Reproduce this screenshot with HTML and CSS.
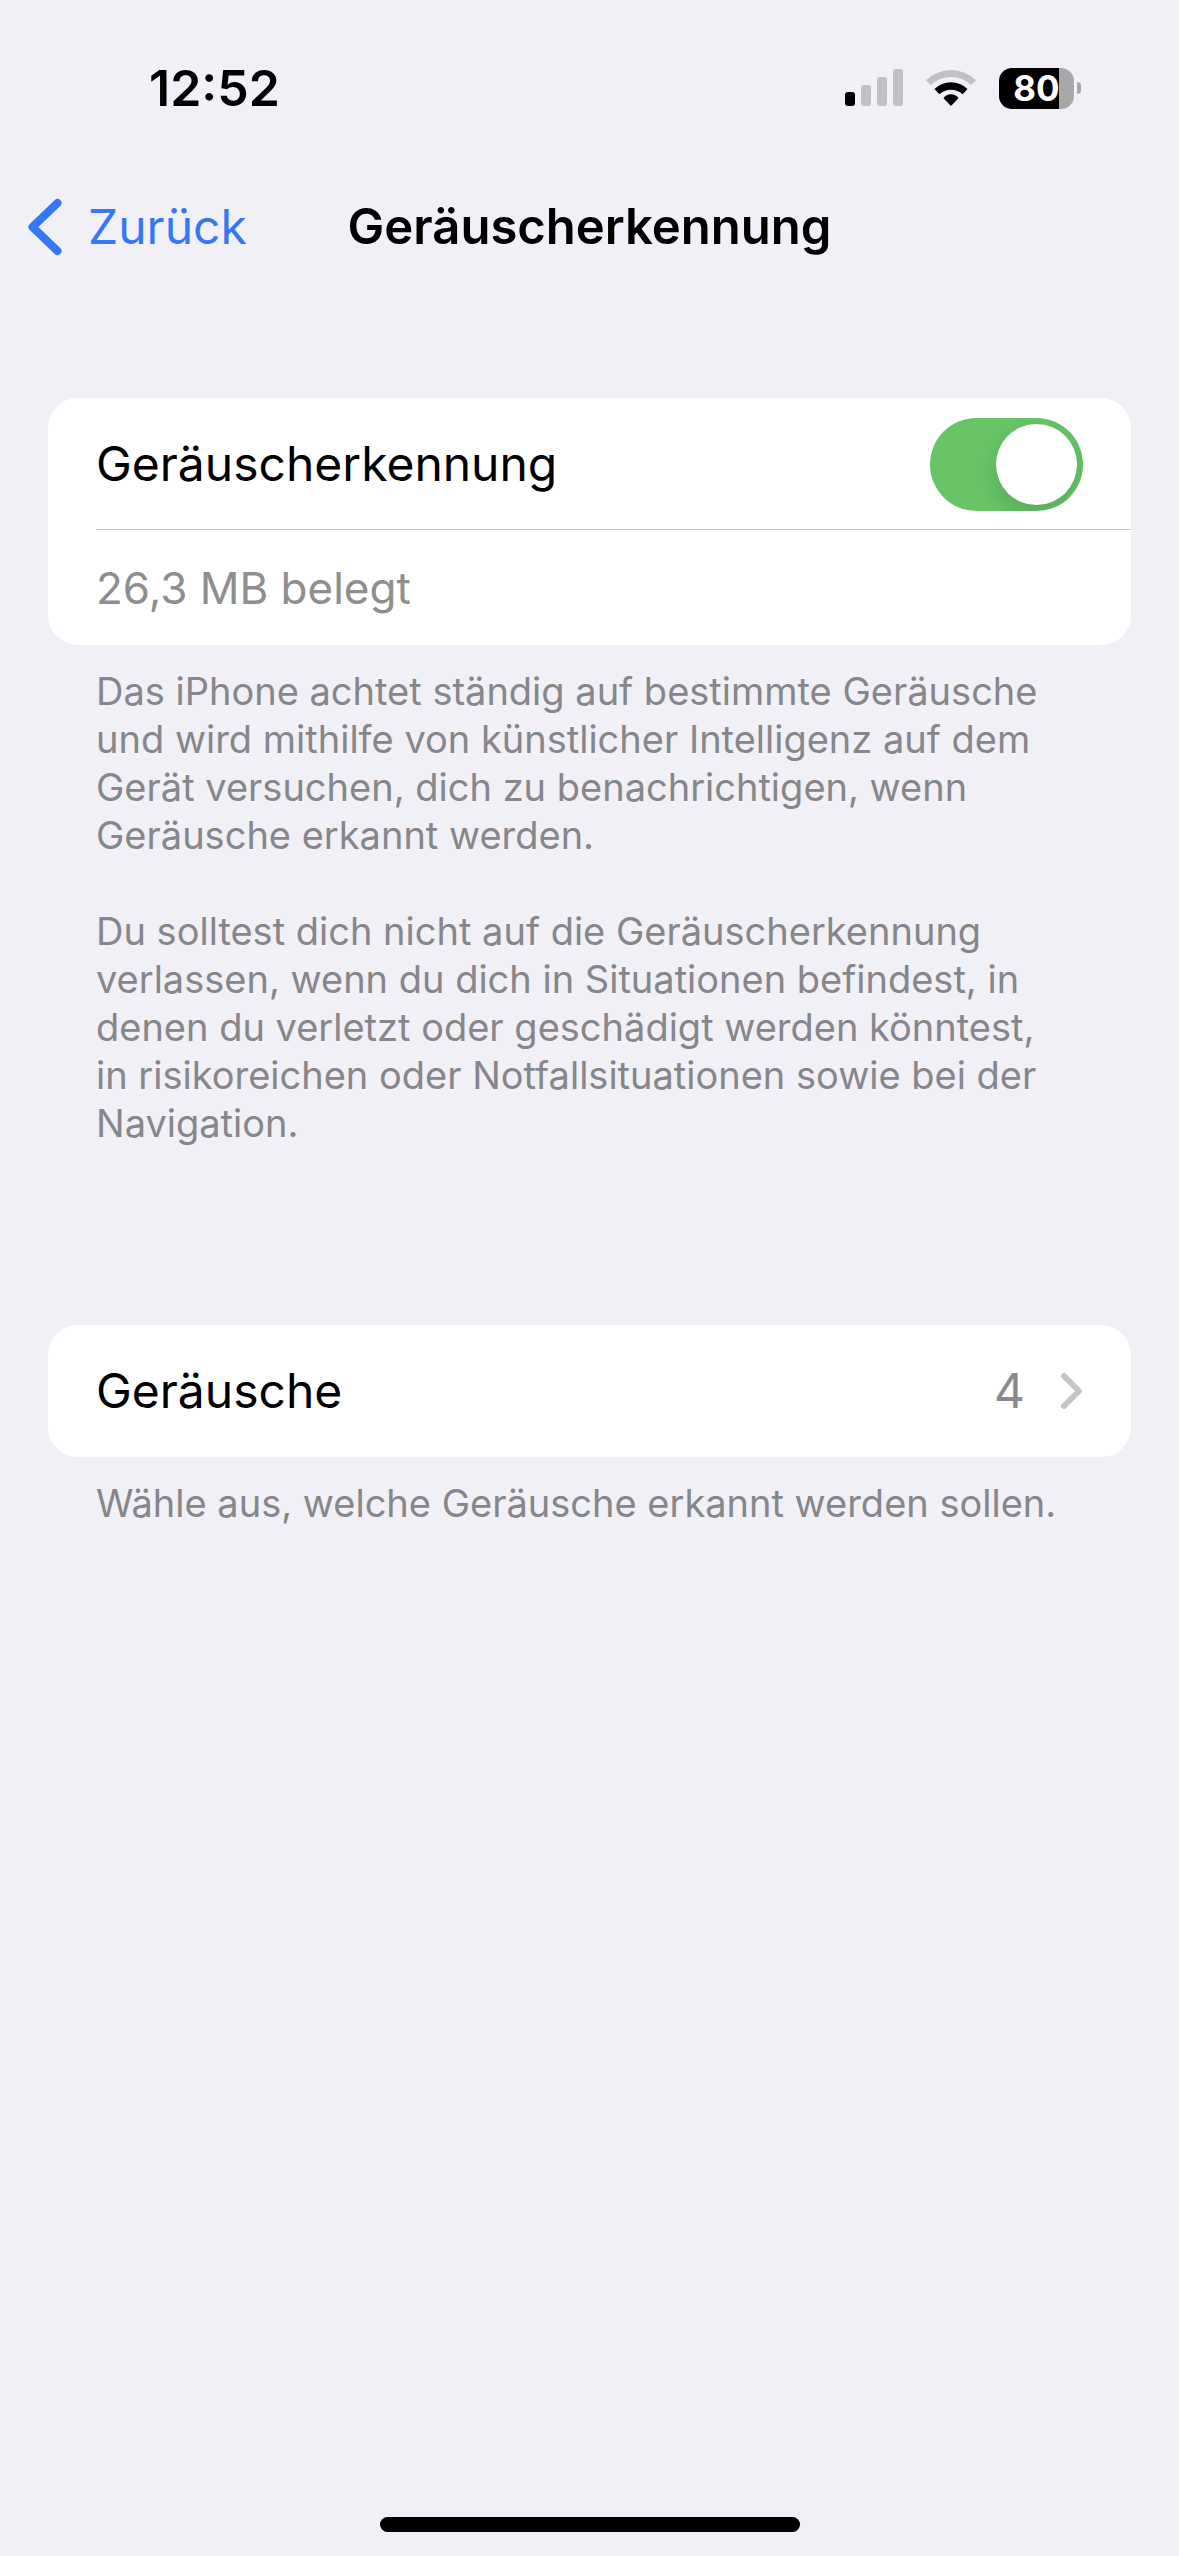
FILE: index.html
```html
<!DOCTYPE html>
<html lang="de">
<head>
    <meta charset="UTF-8">
    <meta name="viewport" content="width=device-width, initial-scale=1.0">
    <title>Geräuscherkennung</title>
    <link rel="stylesheet" href="styles.css">
</head>
<body>
    <div class="screen">
        <div class="status-bar">
            <div class="time">12:52</div>
            <div class="status-icons">
                <svg class="signal" width="58" height="38" viewBox="0 0 58 38" aria-hidden="true">
                    <rect x="0" y="23" width="10" height="14" rx="3" fill="#000"/>
                    <rect x="16" y="16" width="10" height="21" rx="3" fill="#c1c0c5"/>
                    <rect x="32" y="8" width="10" height="29" rx="3" fill="#c1c0c5"/>
                    <rect x="48" y="0" width="10" height="37" rx="3" fill="#c1c0c5"/>
                </svg>
                <svg class="wifi" width="52" height="38" viewBox="0 0 52 38" aria-hidden="true">
                    <path d="M1 11.2A36 36 0 0 1 51 11.2L46 16A29 29 0 0 0 6 16Z" fill="#c1c0c5"/>
                    <path d="M9.5 20A23.500 23.500 0 0 1 42.500 20L37.600 25.200A17 17 0 0 0 14.400 25.200Z" fill="#000"/>
                    <path d="M18.500 29.200A9 9 0 0 1 33.500 29.200L26 37Z" fill="#000"/>
                </svg>
                <div class="battery">
                    <div class="battery-body">80</div>
                    <div class="battery-cap"></div>
                </div>
            </div>
        </div>

        <header class="nav-bar">
            <a class="back" href="#">
                <svg width="34" height="58" viewBox="0 0 34 58" aria-hidden="true">
                    <path d="M29.500 5L4.500 29L29.500 53" fill="none" stroke="#3478f6" stroke-width="8" stroke-linecap="round" stroke-linejoin="round"/>
                </svg>
                <span>Zurück</span>
            </a>
            <h1>Geräuscherkennung</h1>
        </header>

        <main>
            <section class="group">
                <div class="card">
                    <div class="row">
                        <label for="recognition">Geräuscherkennung</label>
                        <input class="switch" type="checkbox" role="switch" id="recognition" checked>
                    </div>
                    <div class="row row-storage">26,3 MB belegt</div>
                </div>
                <div class="note">
                    <p>Das iPhone achtet ständig auf bestimmte Geräusche und wird mithilfe von künstlicher Intelligenz auf dem Gerät versuchen, dich zu benachrichtigen, wenn Geräusche erkannt werden.</p>
                    <p>Du solltest dich nicht auf die Geräuscherkennung verlassen, wenn du dich in Situationen befindest, in denen du verletzt oder geschädigt werden könntest, in risikoreichen oder Notfallsituationen sowie bei der Navigation.</p>
                </div>
            </section>

            <section class="group">
                <div class="card">
                    <a class="row" href="#">
                        <span>Geräusche</span>
                        <span class="value">4
                            <svg width="22" height="38" viewBox="0 0 22 38" aria-hidden="true">
                                <path d="M3 4L18 19L3 34" fill="none" stroke="#c5c5c7" stroke-width="6" stroke-linecap="round" stroke-linejoin="round"/>
                            </svg>
                        </span>
                    </a>
                </div>
                <div class="note">
                    <p>Wähle aus, welche Geräusche erkannt werden sollen.</p>
                </div>
            </section>
        </main>

        <div class="home-indicator"></div>
    </div>
</body>
</html>
```
FILE: styles.css
```css
* {
    box-sizing: border-box;
}
body {
    margin: 0;
    font-family: Inter, "Liberation Sans", sans-serif;
    font-size: 48px;
    line-height: 60px;
    color: #000;
    background-color: #f1f0f6;
}
a {
    color: inherit;
    text-decoration: none;
}
.screen {
    display: flex;
    flex-direction: column;
    min-height: 100vh;
}

/* Status bar */
.status-bar {
    display: flex;
    justify-content: space-between;
    align-items: center;
    height: 176px;
    padding: 0 98px 0 149px;
}
.time {
    font-size: 50px;
    font-weight: 600;
}
.status-icons {
    display: flex;
    align-items: center;
    gap: 22px;
}
.battery {
    display: flex;
    align-items: center;
    gap: 3px;
}
.battery-body {
    width: 75px;
    height: 41px;
    border-radius: 13px;
    background: linear-gradient(to right, #000 60px, #a8a8aa 60px);
    color: #fff;
    font-size: 35px;
    font-weight: 700;
    line-height: 41px;
    text-align: center;
}
.battery-cap {
    width: 4px;
    height: 12px;
    border-radius: 0 4px 4px 0;
    background-color: #a8a8aa;
}

/* Navigation bar */
.nav-bar {
    display: grid;
    grid-template-columns: 1fr auto 1fr;
    align-items: center;
    height: 102px;
    padding: 0 28px;
}
.back {
    display: flex;
    align-items: center;
    gap: 26px;
    color: #3478f6;
}
h1 {
    margin: 0;
    font-size: 49px;
    font-weight: 600;
}

/* Grouped lists */
main {
    flex: 1;
    padding: 120px 48px 0;
}
.group {
    margin-bottom: 178px;
}
.card {
    border-radius: 30px;
    background-color: #fff;
    overflow: hidden;
}
.row {
    display: flex;
    justify-content: space-between;
    align-items: center;
    height: 132px;
    padding: 0 48px;
}
.row-storage {
    height: 116px;
    margin: -1px 0 0 48px;
    padding: 0 48px 0 0;
    border-top: 1px solid #c6c6c8;
    font-size: 44px;
    color: #8e8e8e;
}
.value {
    display: flex;
    align-items: center;
    gap: 36px;
    color: #8a8a8e;
}
.note {
    padding: 22px 64px 0 48px;
    font-size: 38px;
    line-height: 48px;
    color: #86868b;
}
.note p {
    margin: 0 0 48px;
}

/* Toggle */
.switch {
    appearance: none;
    display: flex;
    align-items: center;
    justify-content: flex-end;
    width: 153px;
    height: 93px;
    margin: 0;
    padding: 6px;
    border-radius: 47px;
    background-color: #67c567;
    overflow: hidden;
}
.switch::before {
    content: "";
    width: 81px;
    height: 81px;
    border-radius: 50%;
    background-color: #fff;
    box-shadow: 0 9px 24px rgba(0, 0, 0, 0.15);
}
.switch:not(:checked) {
    justify-content: flex-start;
    background-color: #e9e9ea;
}

.home-indicator {
    width: 420px;
    height: 15px;
    margin: 0 auto 24px;
    border-radius: 8px;
    background-color: #000;
}
```
